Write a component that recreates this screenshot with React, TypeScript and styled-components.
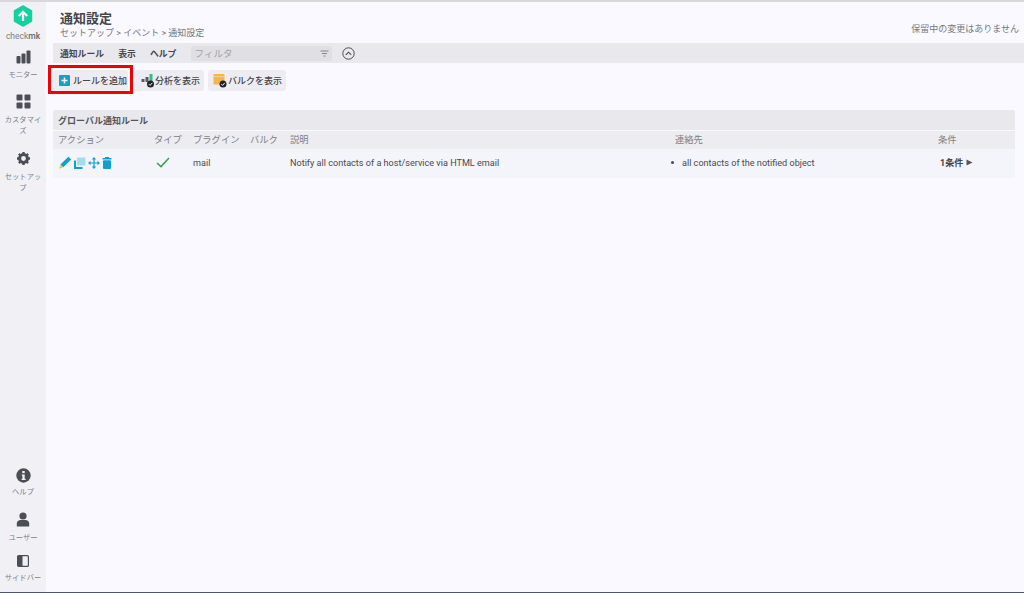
import React from 'react';
import styled, { createGlobalStyle } from 'styled-components';

const FONT = `Roboto, "Noto Sans CJK JP", sans-serif`;

const GlobalStyle = createGlobalStyle`
    html, body {
        margin: 0;
        padding: 0;
        height: 100%;
        overflow: hidden;
    }
    #root {
        height: 100%;
    }
    * {
        box-sizing: border-box;
    }
`;

const Page = styled.div`
    width: 1024px;
    height: 593px;
    display: flex;
    flex-direction: column;
    font-family: ${FONT};
    background: #f9f9ff;
    color: #4a4a50;
`;

const TopLine = styled.div`
    height: 2px;
    flex: none;
    background: #d8d8da;
`;

const BottomLine = styled.div`
    height: 1px;
    flex: none;
    background: #46557f;
`;

const Body = styled.div`
    flex: 1;
    display: flex;
    min-height: 0;
`;

const Sidebar = styled.nav`
    width: 46px;
    flex: none;
    background: #f0f0f5;
    display: flex;
    flex-direction: column;
    align-items: center;
    padding-top: 3px;
`;

const SideGroup = styled.div`
    display: flex;
    flex-direction: column;
    align-items: center;
    width: 100%;
`;

const Spacer = styled.div`
    flex: 1;
`;

const SideItem = styled.div<{ $height: number; $gap?: number }>`
    width: 100%;
    height: ${p => p.$height}px;
    display: flex;
    flex-direction: column;
    align-items: center;
    gap: ${p => p.$gap ?? 5}px;
`;

const SideLabel = styled.div`
    font-size: 7.3px;
    line-height: 11px;
    color: #808086;
    text-align: center;
    width: 42px;
    word-break: break-all;
`;

const LogoLabel = styled.div`
    font-size: 8.5px;
    line-height: 10px;
    color: #808086;

    b {
        font-weight: 500;
        color: #66666a;
    }
`;

const Main = styled.main`
    flex: 1;
    min-width: 0;
    display: flex;
    flex-direction: column;
`;

const Header = styled.header`
    height: 41px;
    flex: none;
    padding: 9px 5px 0 14px;
    display: flex;
    justify-content: space-between;
`;

const Title = styled.h1`
    margin: 0;
    font-size: 13px;
    line-height: 15px;
    font-weight: 700;
    color: #45454a;
`;

const Breadcrumb = styled.div`
    font-size: 9px;
    line-height: 13px;
    margin-top: 1px;
    color: #77777c;
`;

const Pending = styled.div`
    font-size: 9px;
    line-height: 13px;
    margin-top: 12px;
    color: #77777c;
`;

const MenuBar = styled.div`
    height: 20px;
    flex: none;
    margin-left: 7px;
    padding-left: 7px;
    background: #e8e8ed;
    display: flex;
    align-items: center;
`;

const MenuItem = styled.span`
    font-size: 8.8px;
    font-weight: 700;
    color: #45454a;
    margin-right: 14.2px;
`;

const Filter = styled.div`
    width: 141px;
    height: 15px;
    padding: 0 3px 0 4px;
    border-radius: 2px;
    background: #dfdfe4;
    display: flex;
    align-items: center;
    justify-content: space-between;
    font-size: 9.5px;
    color: #a2a2a8;
`;

const CollapseButton = styled.div`
    margin-left: 10px;
    display: flex;
`;

const Toolbar = styled.div`
    flex: none;
    height: 47px;
    padding: 2px 0 0 2px;
    display: flex;
    align-items: flex-start;
    gap: 4px;
`;

const AddHighlight = styled.div`
    height: 29px;
    width: 85px;
    margin-right: -2px;
    border: 3px solid #f00000;
    padding: 1px 2px 0;
    display: flex;
`;

const ToolButton = styled.button<{ $grow?: boolean; $width?: number; $inset?: number; $gap?: number }>`
    all: unset;
    box-sizing: border-box;
    height: 21px;
    margin-top: ${p => (p.$grow ? 1 : 5)}px;
    flex: ${p => (p.$grow ? 1 : 'none')};
    width: ${p => (p.$width ? `${p.$width}px` : 'auto')};
    border-radius: 3px;
    background: #ececf1;
    display: flex;
    align-items: center;
    gap: ${p => p.$gap ?? 0}px;
    padding-left: ${p => p.$inset ?? 5}px;
    font-family: ${FONT};
    font-size: 9px;
    font-weight: 500;
    color: #45454a;
    white-space: nowrap;
`;

const Table = styled.section`
    margin: 0 9px 0 7px;
    border-radius: 2px;
    overflow: hidden;
`;

const TableTitle = styled.div`
    height: 20px;
    padding-left: 5px;
    background: #e8e8ed;
    display: flex;
    align-items: center;
    font-size: 9px;
    font-weight: 700;
    color: #55555a;
`;

const Row = styled.div<{ $head?: boolean }>`
    display: grid;
    grid-template-columns: 96px 39px 57px 40px 385px 263px 1fr;
    align-items: center;
    height: ${p => (p.$head ? 18 : 29)}px;
    margin-top: ${p => (p.$head ? 1 : 0)}px;
    padding: 0 0 ${p => (p.$head ? 3 : 2)}px 5px;
    background: ${p => (p.$head ? '#ececf1' : '#f4f4fb')};
    font-size: ${p => (p.$head ? '9.3px' : '9.1px')};
    color: ${p => (p.$head ? '#808086' : '#4a4a50')};
`;

const ActionIcons = styled.div`
    display: flex;
    align-items: center;
    gap: 2px;
    padding-left: 1px;
`;

const TypeCell = styled.div`
    display: flex;
    padding-left: 2px;
`;

const ContactCell = styled.div`
    display: flex;
    align-items: center;
    gap: 8px;
    margin-left: -4px;
`;

const Bullet = styled.span`
    width: 3px;
    height: 3px;
    border-radius: 50%;
    background: #4a4a50;
`;

const Condition = styled.div`
    display: flex;
    align-items: center;
    gap: 3px;
    padding-left: 2px;
    font-weight: 700;
    font-size: 9px;
    color: #45454a;
`;

const ICON_GREY = '#4d4d55';
const ICON_BLUE = '#0f9fd0';

const LogoIcon = () => (
    <svg width="20" height="22" viewBox="0 0 20 22">
        <path d="M10 1 L18.5 5.8 V16.2 L10 21 L1.5 16.2 V5.8 Z" fill="#15d1a0" stroke="#15d1a0" strokeWidth="1.5" strokeLinejoin="round" />
        <path d="M10 16 V7.5 M5.8 11 L10 6.8 L14.2 11" fill="none" stroke="#f4f4f8" strokeWidth="2.3" />
    </svg>
);

const MonitorIcon = () => (
    <svg width="15" height="14" viewBox="0 0 15 14">
        <rect x="0.5" y="6" width="4" height="7.5" rx="1" fill={ICON_GREY} />
        <rect x="5.5" y="3.5" width="4" height="10" rx="1" fill={ICON_GREY} />
        <rect x="10.5" y="0.5" width="4" height="13" rx="1" fill={ICON_GREY} />
    </svg>
);

const GridIcon = () => (
    <svg width="15" height="15" viewBox="0 0 15 15">
        <rect x="0.5" y="0.5" width="6" height="6" rx="1" fill={ICON_GREY} />
        <rect x="8.5" y="0.5" width="6" height="6" rx="1" fill={ICON_GREY} />
        <rect x="0.5" y="8.5" width="6" height="6" rx="1" fill={ICON_GREY} />
        <rect x="8.5" y="8.5" width="6" height="6" rx="1" fill={ICON_GREY} />
    </svg>
);

const GearIcon = () => (
    <svg width="15" height="15" viewBox="0 0 15 15">
        <circle cx="7.5" cy="7.5" r="3.9" fill="none" stroke={ICON_GREY} strokeWidth="3" />
        <path
            d="M7.5 1 V14 M1 7.5 H14 M2.9 2.9 L12.1 12.1 M12.1 2.9 L2.9 12.1"
            stroke={ICON_GREY}
            strokeWidth="2.4"
            strokeDasharray="2.6 7.8"
        />
    </svg>
);

const InfoIcon = () => (
    <svg width="15" height="15" viewBox="0 0 15 15">
        <circle cx="7.5" cy="7.5" r="7.2" fill={ICON_GREY} />
        <rect x="6.3" y="3" width="2.4" height="2.2" fill="#f0f0f5" />
        <path d="M5.8 6.4 H8.7 V10.7 H9.6 V12 H5.6 V10.7 H6.4 V7.7 H5.8 Z" fill="#f0f0f5" />
    </svg>
);

const UserIcon = () => (
    <svg width="14" height="15" viewBox="0 0 14 15">
        <circle cx="7" cy="4" r="3.6" fill={ICON_GREY} />
        <path d="M0.8 14.5 V11.5 C0.8 9.3 2.6 8 4.5 8 H9.5 C11.4 8 13.2 9.3 13.2 11.5 V14.5 Z" fill={ICON_GREY} />
    </svg>
);

const SidebarIcon = () => (
    <svg width="12" height="12" viewBox="0 0 12 12">
        <rect x="0.6" y="0.6" width="10.8" height="10.8" rx="1" fill="none" stroke={ICON_GREY} strokeWidth="1.2" />
        <rect x="1" y="1" width="4.5" height="10" fill={ICON_GREY} />
    </svg>
);

const FunnelIcon = () => (
    <svg width="9" height="7" viewBox="0 0 9 7">
        <path d="M0.5 1 H8.5 M2 3.5 H7 M3.5 6 H5.5" stroke="#85858b" strokeWidth="1" />
    </svg>
);

const ChevronCircleIcon = () => (
    <svg width="13" height="13" viewBox="0 0 13 13">
        <circle cx="6.5" cy="6.5" r="5.7" fill="none" stroke="#4a4a50" strokeWidth="1" />
        <path d="M3.8 7.8 L6.5 5.2 L9.2 7.8" fill="none" stroke="#4a4a50" strokeWidth="1.1" />
    </svg>
);

const AddIcon = () => (
    <svg width="11" height="11" viewBox="0 0 11 11">
        <rect width="11" height="11" rx="1" fill="#1d9cc4" />
        <path d="M5.5 2.5 V8.5 M2.5 5.5 H8.5" stroke="#e4f4fa" strokeWidth="1.6" />
    </svg>
);

const CheckBadge = ({ x, y }: { x: number; y: number }) => (
    <g transform={`translate(${x} ${y})`}>
        <circle cx="3.5" cy="3.5" r="3.5" fill="#222226" />
        <path d="M1.8 3.6 L3.1 4.9 L5.3 2.3" fill="none" stroke="#f2f2f2" strokeWidth="1" />
    </g>
);

const AnalyzeIcon = () => (
    <svg width="14" height="15" viewBox="0 0 14 15">
        <rect x="0.5" y="6" width="3" height="3" fill="#5a5a60" />
        <rect x="4.5" y="4" width="3" height="5" fill="#5a5a60" />
        <rect x="8.5" y="1" width="3" height="7" fill="#25c48a" />
        <CheckBadge x={6} y={7.5} />
    </svg>
);

const BulkIcon = () => (
    <svg width="15" height="15" viewBox="0 0 15 15">
        <rect x="0.5" y="1" width="11" height="10.5" rx="1" fill="#f3b64c" />
        <path d="M0.5 3.6 H11.5" stroke="#fbe0a8" strokeWidth="1" strokeDasharray="2 1" />
        <CheckBadge x={6.5} y={7.5} />
    </svg>
);

const EditIcon = () => (
    <svg width="13" height="13" viewBox="0 0 13 13">
        <path d="M9.4 0.8 L12.2 3.4 L4.2 11.2 L1.4 8.6 Z" fill={ICON_BLUE} />
        <path d="M1.2 8.9 L3.9 11.5 L0.3 12.7 Z" fill="#f2c230" />
    </svg>
);

const CloneIcon = () => (
    <svg width="12" height="12" viewBox="0 0 12 12">
        <rect x="3" y="0.5" width="8.5" height="8" fill="#a6dcf2" />
        <path d="M1 3.5 V11 H8.5" fill="none" stroke={ICON_BLUE} strokeWidth="2" />
    </svg>
);

const MoveIcon = () => (
    <svg width="12" height="12" viewBox="0 0 12 12" fill={ICON_BLUE}>
        <path d="M6 0 L8.2 2.5 H3.8 Z M6 12 L8.2 9.5 H3.8 Z M0 6 L2.5 3.8 V8.2 Z M12 6 L9.5 3.8 V8.2 Z" />
        <path d="M6 2 V10 M2 6 H10" stroke={ICON_BLUE} strokeWidth="1.2" />
    </svg>
);

const TrashIcon = () => (
    <svg width="10" height="12" viewBox="0 0 10 12">
        <rect x="3" y="0" width="4" height="1.5" fill={ICON_BLUE} />
        <rect x="0.5" y="1" width="9" height="1.6" rx="0.5" fill={ICON_BLUE} />
        <rect x="1" y="3.2" width="8" height="8.8" rx="1" fill={ICON_BLUE} />
    </svg>
);

const CheckIcon = () => (
    <svg width="14" height="11" viewBox="0 0 14 11">
        <path d="M1 6 L5 9.6 L13 1" fill="none" stroke="#3fa34d" strokeWidth="1.6" />
    </svg>
);

const ArrowIcon = () => (
    <svg width="7" height="7" viewBox="0 0 7 7">
        <path d="M0.5 0.5 L6.5 3.5 L0.5 6.5 Z" fill="#55555a" />
    </svg>
);

const App = () => (
    <Page>
        <GlobalStyle />
        <TopLine />
        <Body>
            <Sidebar>
                <SideGroup>
                    <SideItem $height={45} $gap={4}>
                        <LogoIcon />
                        <LogoLabel>
                            check<b>mk</b>
                        </LogoLabel>
                    </SideItem>
                    <SideItem $height={44}>
                        <MonitorIcon />
                        <SideLabel>モニター</SideLabel>
                    </SideItem>
                    <SideItem $height={57}>
                        <GridIcon />
                        <SideLabel>カスタマイズ</SideLabel>
                    </SideItem>
                    <SideItem $height={50}>
                        <GearIcon />
                        <SideLabel>セットアップ</SideLabel>
                    </SideItem>
                </SideGroup>
                <Spacer />
                <SideGroup>
                    <SideItem $height={44} $gap={3}>
                        <InfoIcon />
                        <SideLabel>ヘルプ</SideLabel>
                    </SideItem>
                    <SideItem $height={43} $gap={5}>
                        <UserIcon />
                        <SideLabel>ユーザー</SideLabel>
                    </SideItem>
                    <SideItem $height={37} $gap={5}>
                        <SidebarIcon />
                        <SideLabel>サイドバー</SideLabel>
                    </SideItem>
                </SideGroup>
            </Sidebar>
            <Main>
                <Header>
                    <div>
                        <Title>通知設定</Title>
                        <Breadcrumb>セットアップ &gt; イベント &gt; 通知設定</Breadcrumb>
                    </div>
                    <Pending>保留中の変更はありません</Pending>
                </Header>
                <MenuBar>
                    <MenuItem>通知ルール</MenuItem>
                    <MenuItem>表示</MenuItem>
                    <MenuItem>ヘルプ</MenuItem>
                    <Filter>
                        フィルタ
                        <FunnelIcon />
                    </Filter>
                    <CollapseButton>
                        <ChevronCircleIcon />
                    </CollapseButton>
                </MenuBar>
                <Toolbar>
                    <AddHighlight>
                        <ToolButton $grow $inset={6} $gap={3}>
                            <AddIcon />
                            ルールを追加
                        </ToolButton>
                    </AddHighlight>
                    <ToolButton $width={69} $inset={6}>
                        <AnalyzeIcon />
                        分析を表示
                    </ToolButton>
                    <ToolButton $width={78}>
                        <BulkIcon />
                        バルクを表示
                    </ToolButton>
                </Toolbar>
                <Table>
                    <TableTitle>グローバル通知ルール</TableTitle>
                    <Row $head>
                        <span>アクション</span>
                        <span>タイプ</span>
                        <span>プラグイン</span>
                        <span>バルク</span>
                        <span>説明</span>
                        <span>連絡先</span>
                        <span>条件</span>
                    </Row>
                    <Row>
                        <ActionIcons>
                            <EditIcon />
                            <CloneIcon />
                            <MoveIcon />
                            <TrashIcon />
                        </ActionIcons>
                        <TypeCell>
                            <CheckIcon />
                        </TypeCell>
                        <span>mail</span>
                        <span />
                        <span>Notify all contacts of a host/service via HTML email</span>
                        <ContactCell>
                            <Bullet />
                            all contacts of the notified object
                        </ContactCell>
                        <Condition>
                            1条件
                            <ArrowIcon />
                        </Condition>
                    </Row>
                </Table>
            </Main>
        </Body>
        <BottomLine />
    </Page>
);

export default App;
